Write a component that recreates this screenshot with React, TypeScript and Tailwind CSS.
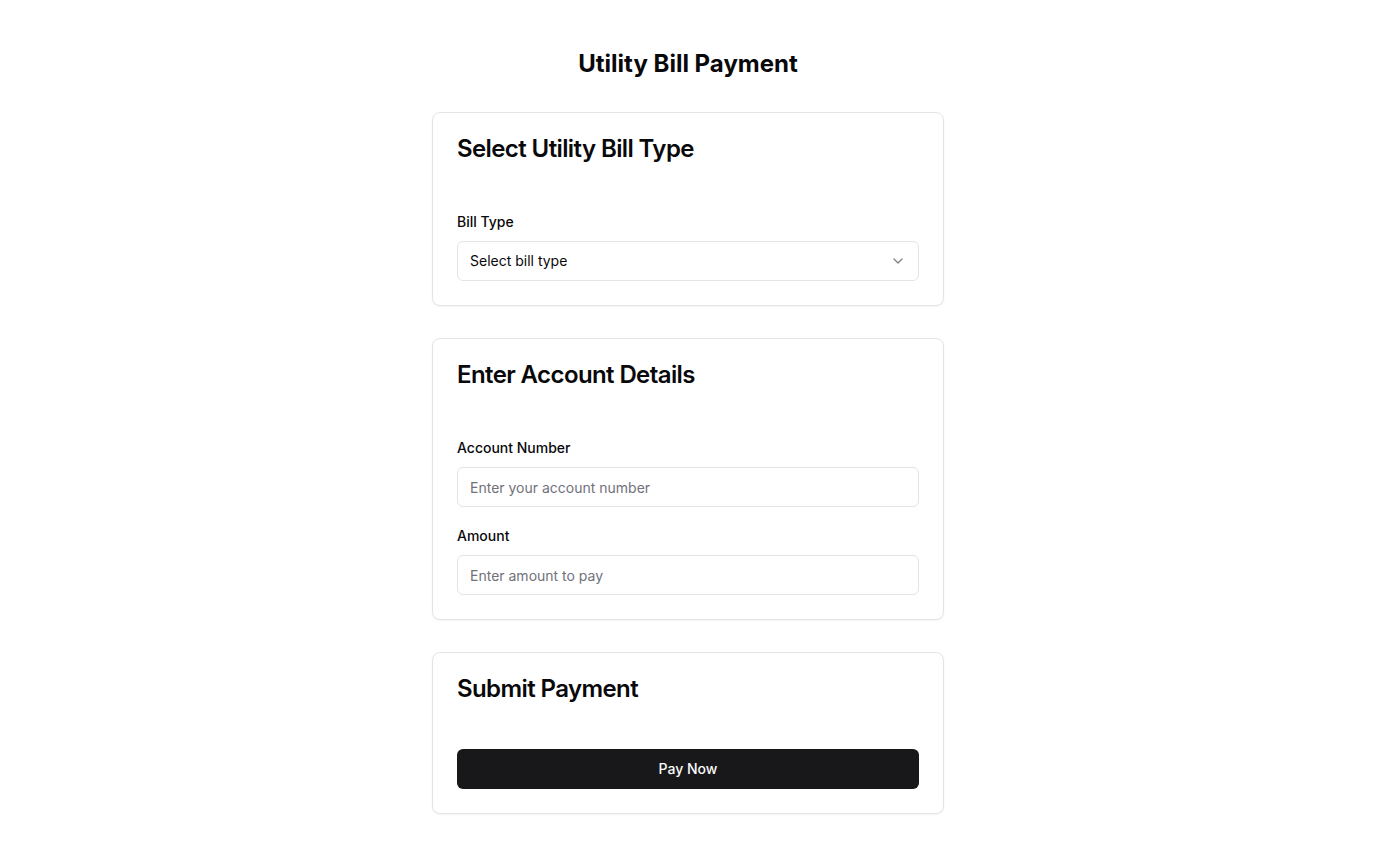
import React from "react";

function Chevron() {
  return (
    <svg width="16" height="16" viewBox="0 0 24 24" fill="none" stroke="currentColor" strokeWidth="2" strokeLinecap="round" strokeLinejoin="round" className="opacity-50">
      <path d="m6 9 6 6 6-6" />
    </svg>
  );
}

function Card({ title, children, contentPt }: { title: string; children: React.ReactNode; contentPt: string }) {
  return (
    <div className="rounded-lg border border-[#e4e4e7] bg-white text-[#09090b] shadow-xs">
      <div className="px-6 pt-6">
        <h3 className="text-2xl font-semibold leading-none tracking-tight">{title}</h3>
      </div>
      <div className={`px-6 pb-6 ${contentPt}`}>{children}</div>
    </div>
  );
}

export default function App() {
  return (
    <div className="min-h-screen bg-white pt-12 pb-12" style={{ fontFamily: "Inter, 'Noto Sans', sans-serif" }}>
      <h1 className="mb-8 text-center text-2xl font-bold leading-8 text-[#09090b]">Utility Bill Payment</h1>
      <div className="mx-auto flex w-[512px] flex-col gap-8">
        <Card title="Select Utility Bill Type" contentPt="pt-[54px]">
          <label className="block text-sm font-medium leading-none">Bill Type</label>
          <div className="mt-[12px] flex h-10 w-full items-center justify-between rounded-md border border-[#e4e4e7] bg-white px-3 text-sm">
            <span>Select bill type</span>
            <Chevron />
          </div>
        </Card>
        <Card title="Enter Account Details" contentPt="pt-[54px]">
          <label className="block text-sm font-medium leading-none">Account Number</label>
          <input
            className="mt-[12px] flex h-10 w-full rounded-md border border-[#e4e4e7] bg-white px-3 text-sm outline-none placeholder:text-[#71717a]"
            placeholder="Enter your account number"
          />
          <label className="mt-[22px] block text-sm font-medium leading-none">Amount</label>
          <input
            className="mt-[12px] flex h-10 w-full rounded-md border border-[#e4e4e7] bg-white px-3 text-sm outline-none placeholder:text-[#71717a]"
            placeholder="Enter amount to pay"
          />
        </Card>
        <Card title="Submit Payment" contentPt="pt-[48px]">
          <button className="flex h-10 w-full items-center justify-center rounded-md bg-[#18181b] text-sm font-medium text-[#fafafa]">
            Pay Now
          </button>
        </Card>
      </div>
    </div>
  );
}
